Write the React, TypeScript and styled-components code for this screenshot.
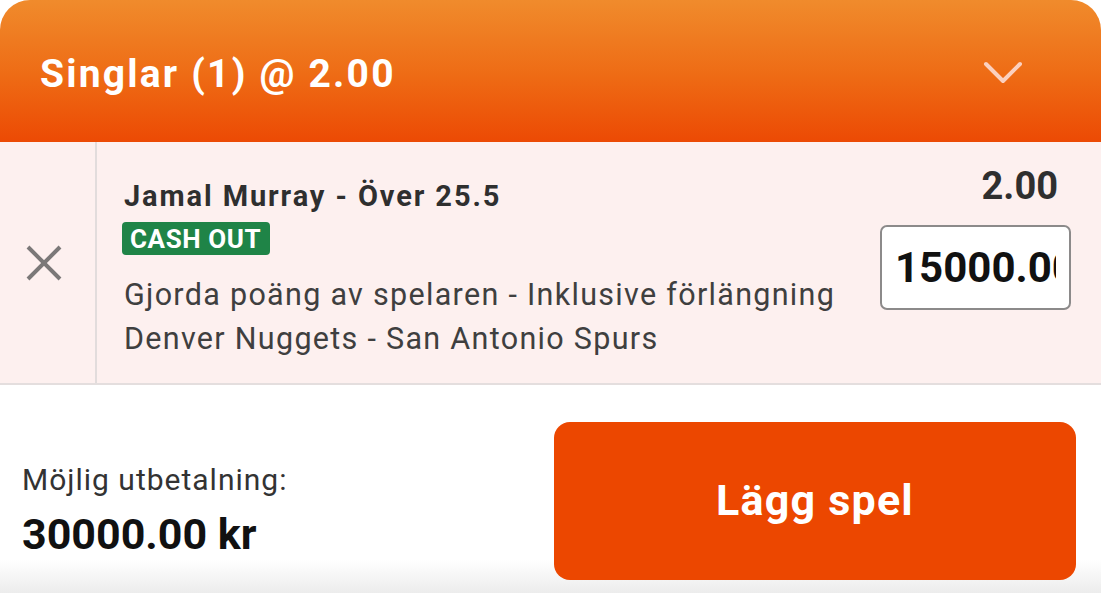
import React from 'react'
import styled, { createGlobalStyle } from 'styled-components'

const GlobalStyle = createGlobalStyle`
  html, body {
    margin: 0;
    padding: 0;
    background: #ffffff;
    font-family: Roboto, "Noto Sans", sans-serif;
  }
  * { box-sizing: border-box; }
`

const Slip = styled.div`
  width: 1101px;
  height: 593px;
  display: flex;
  flex-direction: column;
  overflow: hidden;
  background: linear-gradient(to bottom, #fff 0, #fff 560px, #ececec 593px);
`

const Header = styled.div`
  height: 142px;
  flex-shrink: 0;
  display: flex;
  align-items: center;
  justify-content: space-between;
  padding: 0 78px 0 40px;
  border-radius: 30px 30px 0 0;
  background: linear-gradient(to bottom, #f08b2c 0%, #ee6a14 55%, #ec4a04 100%);
`

const Title = styled.h1`
  margin: 6px 0 0;
  color: #fff;
  font-size: 39px;
  font-weight: 700;
  letter-spacing: 2.2px;
`

const ChevronWrap = styled.div`
  display: flex;
  margin-top: 4px;
`

const BetRow = styled.div`
  height: 243px;
  flex-shrink: 0;
  display: flex;
  background: #fdf0ef;
  border-bottom: 2px solid #e4dede;
`

const RemoveCell = styled.div`
  width: 97px;
  flex-shrink: 0;
  display: flex;
  align-items: center;
  justify-content: center;
  border-right: 2px solid #e2dcdc;
  padding: 0 8px 0 0;
`

const Details = styled.div`
  flex: 1;
  padding: 34px 0 0 27px;
  display: flex;
  flex-direction: column;
`

const Selection = styled.div`
  color: #2f2f2f;
  font-size: 29px;
  font-weight: 700;
  line-height: 40px;
  letter-spacing: 1.9px;
`

const Badge = styled.span`
  align-self: flex-start;
  margin: 6px 0 0 -2px;
  padding: 0 9px 0 8px;
  height: 33px;
  line-height: 34px;
  background: #1f8447;
  color: #fff;
  font-size: 26px;
  font-weight: 700;
  letter-spacing: 0.6px;
  border-radius: 4px;
`

const Info = styled.div`
  margin-top: 18px;
  color: #3f3f3f;
  font-size: 30.5px;
  line-height: 44px;
  letter-spacing: 1.3px;
`

const Side = styled.div`
  width: 220px;
  flex-shrink: 0;
  padding: 24px 30px 0 0;
  display: flex;
  flex-direction: column;
  align-items: flex-end;
`

const Odds = styled.div`
  color: #2f2f2f;
  font-size: 38px;
  font-weight: 700;
  line-height: 40px;
  margin-right: 13px;
`

const Stake = styled.input`
  margin-top: 19px;
  width: 191px;
  height: 85px;
  background: #fff;
  border: 2px solid #8c8a8a;
  border-radius: 7px;
  padding: 0 13px;
  outline: none;
  color: #111;
  font-family: Roboto, "Noto Sans", sans-serif;
  font-size: 42px;
  font-weight: 700;
`

const Footer = styled.div`
  flex: 1;
  display: flex;
  align-items: flex-start;
  justify-content: space-between;
  padding: 37px 25px 0 22px;
`

const Payout = styled.div`
  padding-top: 40px;
  display: flex;
  flex-direction: column;
`

const PayoutLabel = styled.div`
  color: #333;
  font-size: 30px;
  line-height: 36px;
  letter-spacing: 1px;
`

const PayoutValue = styled.div`
  margin-top: 11px;
  color: #111;
  font-size: 43px;
  font-weight: 700;
  line-height: 50px;
`

const PlaceButton = styled.button`
  width: 522px;
  height: 158px;
  border: none;
  border-radius: 16px;
  background: #ec4700;
  color: #fff;
  font-family: Roboto, "Noto Sans", sans-serif;
  font-size: 43px;
  font-weight: 700;
  letter-spacing: 1.2px;
  padding-bottom: 4px;
  cursor: pointer;
`

function Chevron() {
  return (
    <svg width="40" height="24" viewBox="0 0 40 24" fill="none">
      <path d="M3 3 L20 20 L37 3" stroke="#fbd0bf" strokeWidth="4" strokeLinecap="round" strokeLinejoin="round" />
    </svg>
  )
}

function CloseIcon() {
  return (
    <svg width="36" height="36" viewBox="0 0 36 36" fill="none">
      <path d="M2 2 L34 34 M34 2 L2 34" stroke="#7b7878" strokeWidth="4" />
    </svg>
  )
}

export default function App() {
  return (
    <>
      <GlobalStyle />
      <Slip>
        <Header>
          <Title>Singlar (1) @ 2.00</Title>
          <ChevronWrap>
            <Chevron />
          </ChevronWrap>
        </Header>
        <BetRow>
          <RemoveCell>
            <CloseIcon />
          </RemoveCell>
          <Details>
            <Selection>Jamal Murray - Över 25.5</Selection>
            <Badge>CASH OUT</Badge>
            <Info>
              Gjorda poäng av spelaren - Inklusive förlängning
              <br />
              Denver Nuggets - San Antonio Spurs
            </Info>
          </Details>
          <Side>
            <Odds>2.00</Odds>
            <Stake readOnly value="15000.00" />
          </Side>
        </BetRow>
        <Footer>
          <Payout>
            <PayoutLabel>Möjlig utbetalning:</PayoutLabel>
            <PayoutValue>30000.00 kr</PayoutValue>
          </Payout>
          <PlaceButton>Lägg spel</PlaceButton>
        </Footer>
      </Slip>
    </>
  )
}
